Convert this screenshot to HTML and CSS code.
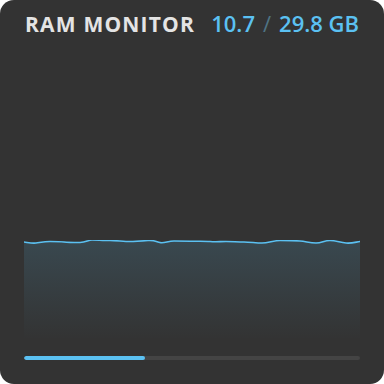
FILE: index.html
```html
<!DOCTYPE html>
<html>
<head>
<meta charset="utf-8">
<link rel="stylesheet" href="styles.css">
</head>
<body>
<div class="card">
  <div class="header">
    <span class="title">RAM MONITOR</span>
    <span class="value"><span class="used">10.7</span><span class="sep">/</span><span class="total">29.8 GB</span></span>
  </div>
  <div class="chart">
    <svg viewBox="0 0 336 100" width="336" height="100" preserveAspectRatio="none">
      <defs>
        <linearGradient id="fill" x1="0" y1="0" x2="0" y2="1">
          <stop offset="0" stop-color="#5bc1f2" stop-opacity="0.15"/>
          <stop offset="1" stop-color="#5bc1f2" stop-opacity="0.0"/>
        </linearGradient>
      </defs>
      <path d="M0 2 C4 2.5 8 3.5 12 3 S20 1.5 26 1.5 S36 1.5 40 2 S50 2.5 56 2.5 S64 0 68 0 S80 0.5 86 0.5 S100 1.5 106 1.5 S118 1 124 0.5 S132 1.5 136 2.5 S144 1 150 1 S160 1 166 1.2 S180 1 186 1.5 S196 1.5 202 1.5 S214 2 220 2 S232 3 238 3 S250 0.5 256 0.5 S270 0.5 276 1 S286 3 292 3 S300 0.5 306 0.5 S316 2.5 322 3 S332 2 336 1.5 L336 100 L0 100 Z" fill="url(#fill)"/>
      <path d="M0 2 C4 2.5 8 3.5 12 3 S20 1.5 26 1.5 S36 1.5 40 2 S50 2.5 56 2.5 S64 0 68 0 S80 0.5 86 0.5 S100 1.5 106 1.5 S118 1 124 0.5 S132 1.5 136 2.5 S144 1 150 1 S160 1 166 1.2 S180 1 186 1.5 S196 1.5 202 1.5 S214 2 220 2 S232 3 238 3 S250 0.5 256 0.5 S270 0.5 276 1 S286 3 292 3 S300 0.5 306 0.5 S316 2.5 322 3 S332 2 336 1.5" fill="none" stroke="#5bc1f2" stroke-width="1.6"/>
    </svg>
  </div>
  <div class="bar"><div class="bar-fill" style="width:36%"></div></div>
</div>
</body>
</html>
```
FILE: styles.css
```css
html, body {
  margin: 0;
  padding: 0;
  background: #ffffff;
}
.card {
  width: 384px;
  height: 384px;
  box-sizing: border-box;
  background: #333333;
  border-radius: 14px;
  padding: 8px 24px 24px 24px;
  display: flex;
  flex-direction: column;
  font-family: "Open Sans", "Liberation Sans", sans-serif;
}
.header {
  display: flex;
  justify-content: space-between;
  align-items: baseline;
  line-height: 30px;
}
.title {
  margin-left: 1px;
  color: #e4e4e4;
  font-size: 21px;
  font-weight: 700;
  letter-spacing: 1.2px;
}
.value {
  color: #5bc1f2;
  font-size: 22px;
  font-weight: 600;
  margin-right: 1px;
}
.sep {
  color: #4f7384;
  font-weight: 400;
  margin: 0 8px;
}
.chart {
  margin-top: auto;
  height: 100px;
  line-height: 0;
}
.chart svg {
  display: block;
}
.bar {
  margin-top: 16px;
  height: 4px;
  border-radius: 2px;
  background: #444444;
  overflow: hidden;
}
.bar-fill {
  height: 100%;
  border-radius: 2px;
  background: #5bc1f2;
}
```
